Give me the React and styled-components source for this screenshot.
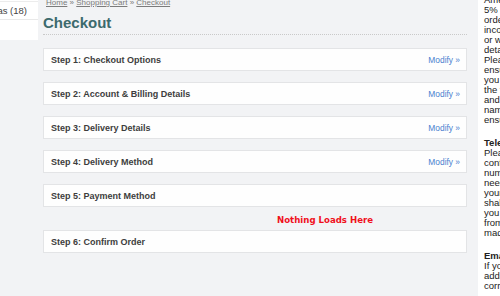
import React from "react";
import styled, { createGlobalStyle } from "styled-components";

const Global = createGlobalStyle`
  html, body { margin: 0; padding: 0; background: #f2f3f5; }
  body { font-family: "Liberation Sans", Arial, sans-serif; overflow: hidden; }
  * { box-sizing: border-box; }
`;

const Page = styled.div`
  display: flex;
  align-items: flex-start;
  width: 500px;
  height: 296px;
  overflow: hidden;
`;

const Sidebar = styled.div`
  flex: 0 0 38px;
  height: 40px;
  background: #fff;
  overflow: hidden;
`;

const SideItem = styled.div`
  display: flex;
  justify-content: flex-end;
  height: 19px;
  margin-top: 1px;
  padding-right: 11px;
  border-top: 1px solid #ececec;
  border-bottom: 1px solid #e9e9e9;
  font-size: 9.5px;
  line-height: 17px;
  color: #444;
  white-space: nowrap;
`;

const Main = styled.div`
  flex: 0 0 424px;
  margin-left: 5px;
  display: flex;
  flex-direction: column;
`;

const Breadcrumb = styled.div`
  margin-top: -2px;
  padding-left: 3px;
  font-size: 8px;
  line-height: 10px;
  color: #7b7b7b;
  a { color: #7b7b7b; text-decoration: underline; }
`;

const Title = styled.h1`
  margin: 6px 0 13px;
  padding-bottom: 2px;
  font-size: 15px;
  line-height: 18px;
  font-weight: bold;
  color: #3c6a6d;
  border-bottom: 1px dotted #c9c9c9;
`;

const Step = styled.div`
  margin-bottom: ${(p) => (p.$open ? 0 : 11)}px;
`;

const StepHead = styled.div`
  display: flex;
  justify-content: space-between;
  align-items: center;
  height: 23px;
  padding: 0 6px 0 7px;
  background: #fefefe;
  border: 1px solid #e3e4e6;
`;

const StepTitle = styled.span`
  font-size: 9px;
  font-weight: bold;
  color: #3d3d3d;
`;

const Modify = styled.a`
  font-size: 8.4px;
  color: #4b7fcf;
  text-decoration: none;
`;

const StepBody = styled.div`
  padding: 5px 0 4px 234px;
  line-height: 12px;
`;

const Empty = styled.span`
  font-family: "DejaVu Sans", Verdana, sans-serif;
  font-size: 8.6px;
  font-weight: bold;
  color: #f0101c;
  white-space: nowrap;
`;

const Aside = styled.div`
  flex: 1 0 0;
  margin-left: 11px;
  align-self: stretch;
  background: #fff;
  padding: 0 0 0 6px;
  overflow: hidden;
`;

const AsideInner = styled.div`
  margin-top: -5px;
  font-size: 9.5px;
  line-height: 10px;
  color: #222;
  white-space: nowrap;
`;

const Para = styled.p`
  margin: 0 0 13px;
`;

const ParaHead = styled.b`
  display: block;
  font-weight: bold;
`;

const Line = styled.span`
  display: block;
`;

const steps = [
  { n: 1, t: "Checkout Options", mod: true },
  { n: 2, t: "Account & Billing Details", mod: true },
  { n: 3, t: "Delivery Details", mod: true },
  { n: 4, t: "Delivery Method", mod: true },
  { n: 5, t: "Payment Method", open: true },
  { n: 6, t: "Confirm Order" },
];

const paras = [
  {
    lines: [
      "American Express cards incur a",
      "5% surcharge on all",
      "orders. To avoid",
      "incorrect addresses",
      "or wrong delivery",
      "details:",
      "Please check that",
      "ensure that",
      "you have entered",
      "the full address",
      "and the correct",
      "name, and",
      "ensure it matches.",
    ],
  },
  {
    head: "Telephone",
    lines: [
      "Please",
      "confirm your",
      "number, it is",
      "needed so",
      "your courier",
      "shall contact",
      "you directly",
      "from where",
      "made.",
    ],
  },
  {
    head: "Email",
    lines: ["If you", "address is", "correct"],
  },
];

export default function App() {
  return (
    <>
      <Global />
      <Page>
        <Sidebar>
          <SideItem>Cameras (18)</SideItem>
        </Sidebar>
        <Main>
          <Breadcrumb>
            <a href="#">Home</a> » <a href="#">Shopping Cart</a> » <a href="#">Checkout</a>
          </Breadcrumb>
          <Title>Checkout</Title>
          {steps.map((s) => (
            <Step key={s.n} $open={s.open}>
              <StepHead>
                <StepTitle>
                  Step {s.n}: {s.t}
                </StepTitle>
                {s.mod && <Modify href="#">Modify »</Modify>}
              </StepHead>
              {s.open && (
                <StepBody>
                  <Empty>Nothing Loads Here</Empty>
                </StepBody>
              )}
            </Step>
          ))}
        </Main>
        <Aside>
          <AsideInner>
            {paras.map((p, i) => (
              <Para key={i}>
                {p.head && <ParaHead>{p.head}</ParaHead>}
                {p.lines.map((l, j) => (
                  <Line key={j}>{l}</Line>
                ))}
              </Para>
            ))}
          </AsideInner>
        </Aside>
      </Page>
    </>
  );
}
